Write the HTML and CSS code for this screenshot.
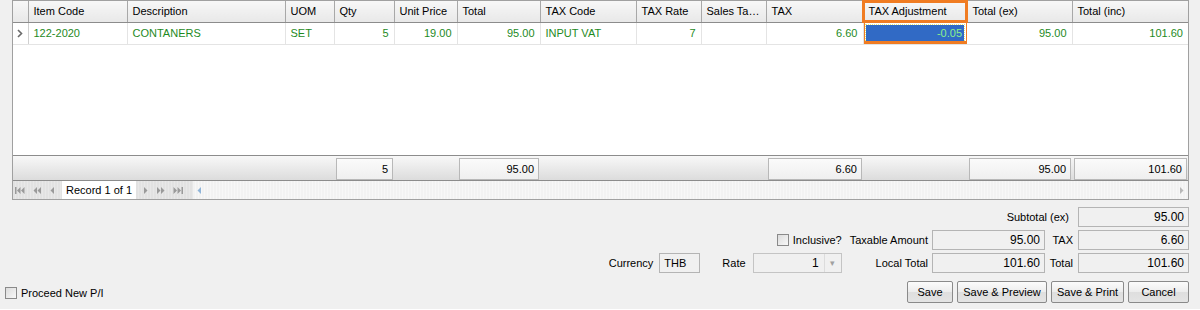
FILE: index.html
```html
<!DOCTYPE html>
<html lang="en">
<head>
  <meta charset="UTF-8">
  <title>Purchase Invoice Lines</title>
  <link rel="stylesheet" href="styles.css">
</head>
<body>
  <div class="grid">
    <table class="lines">
      <colgroup>
        <col style="width:15px"><col style="width:99px"><col style="width:158px"><col style="width:49px">
        <col style="width:60px"><col style="width:63px"><col style="width:83px"><col style="width:96px">
        <col style="width:65px"><col style="width:65px"><col style="width:97px"><col style="width:104px">
        <col style="width:105px"><col style="width:116px">
      </colgroup>
      <thead>
        <tr>
          <th class="ind"></th>
          <th>Item Code</th>
          <th>Description</th>
          <th>UOM</th>
          <th>Qty</th>
          <th>Unit Price</th>
          <th>Total</th>
          <th>TAX Code</th>
          <th>TAX Rate</th>
          <th>Sales Ta…</th>
          <th>TAX</th>
          <th class="hl-head">TAX Adjustment</th>
          <th>Total (ex)</th>
          <th>Total (inc)</th>
        </tr>
      </thead>
      <tbody>
        <tr class="line">
          <td class="ind"><svg width="6" height="9" viewBox="0 0 6 9"><path d="M1 1 L4.5 4.5 L1 8" fill="none" stroke="#6a6a6a" stroke-width="1.6"/></svg></td>
          <td>122-2020</td>
          <td>CONTANERS</td>
          <td>SET</td>
          <td class="num">5</td>
          <td class="num">19.00</td>
          <td class="num">95.00</td>
          <td>INPUT VAT</td>
          <td class="num">7</td>
          <td></td>
          <td class="num">6.60</td>
          <td class="num hl-cell"><span class="focus">-0.05</span></td>
          <td class="num">95.00</td>
          <td class="num">101.60</td>
        </tr>
        <tr class="empty">
          <td class="ind"></td>
          <td colspan="13"></td>
        </tr>
      </tbody>
    </table>

    <div class="sums">
      <div></div><div></div><div></div><div></div>
      <div class="sum">5</div>
      <div></div>
      <div class="sum">95.00</div>
      <div></div><div></div><div></div>
      <div class="sum">6.60</div>
      <div></div>
      <div class="sum">95.00</div>
      <div class="sum">101.60</div>
    </div>

    <div class="nav">
      <div class="nav-buttons">
        <svg width="10" height="7" viewBox="0 0 10 7"><rect x="0" y="0" width="1.5" height="7" fill="#9a9a9a"/><path d="M5.5 0 L2 3.5 L5.5 7Z M9.5 0 L6 3.5 L9.5 7Z" fill="#9a9a9a"/></svg>
        <svg width="9" height="7" viewBox="0 0 9 7"><path d="M4 0 L0.5 3.5 L4 7Z M8 0 L4.5 3.5 L8 7Z" fill="#9a9a9a"/></svg>
        <svg width="4" height="7" viewBox="0 0 4 7"><path d="M4 0 L0.5 3.5 L4 7Z" fill="#9a9a9a"/></svg>
        <span class="record">Record 1 of 1</span>
        <svg width="4" height="7" viewBox="0 0 4 7"><path d="M0 0 L3.5 3.5 L0 7Z" fill="#9a9a9a"/></svg>
        <svg width="9" height="7" viewBox="0 0 9 7"><path d="M1 0 L4.5 3.5 L1 7Z M5 0 L8.5 3.5 L5 7Z" fill="#9a9a9a"/></svg>
        <svg width="10" height="7" viewBox="0 0 10 7"><path d="M0.5 0 L4 3.5 L0.5 7Z M4.5 0 L8 3.5 L4.5 7Z" fill="#9a9a9a"/><rect x="8.5" y="0" width="1.5" height="7" fill="#9a9a9a"/></svg>
      </div>
      <div class="hscroll">
        <svg width="4" height="7" viewBox="0 0 4 7"><path d="M4 0 L0.5 3.5 L4 7Z" fill="#8fb4d8"/></svg>
        <svg width="4" height="7" viewBox="0 0 4 7"><path d="M0 0 L3.5 3.5 L0 7Z" fill="#b8b8b8"/></svg>
      </div>
    </div>
  </div>

  <div class="summary">
    <div class="label span3">Subtotal (ex)</div>
    <div class="box">95.00</div>

    <div class="label lead">
      <label class="check"><span class="tick"></span>Inclusive?</label>
      <span class="caption">Taxable Amount</span>
    </div>
    <div class="box">95.00</div>
    <div class="label small">TAX</div>
    <div class="box">6.60</div>

    <div class="label lead">
      <span>Currency</span>
      <span class="box code">THB</span>
      <span class="rate-label">Rate</span>
      <span class="combo"><span class="combo-val">1</span><span class="combo-btn">&#x25BE;</span></span>
      <span class="caption wide">Local Total</span>
    </div>
    <div class="box">101.60</div>
    <div class="label small">Total</div>
    <div class="box">101.60</div>
  </div>

  <div class="actions">
    <label class="check proceed"><span class="tick"></span>Proceed New P/I</label>
    <div class="buttons">
      <button class="btn save">Save</button>
      <button class="btn preview">Save &amp; Preview</button>
      <button class="btn print">Save &amp; Print</button>
      <button class="btn cancel">Cancel</button>
    </div>
  </div>
</body>
</html>
```

FILE: styles.css
```css
body {
  margin: 0;
  background: #f0f0f0;
  font-family: "Liberation Sans", Arial, sans-serif;
  font-size: 11px;
  color: #000;
  height: 310px;
  overflow: hidden;
  border-bottom: 1px solid #fff;
  box-sizing: border-box;
}

/* grid */
.grid {
  margin-left: 12px;
  width: 1177px;
  border: 1px solid #a0a0a0;
  box-sizing: border-box;
  background: #fff;
}

.lines {
  border-collapse: collapse;
  table-layout: fixed;
  width: 1175px;
}

.lines th {
  height: 21px;
  padding: 0 5px;
  text-align: left;
  font-weight: normal;
  white-space: nowrap;
  overflow: hidden;
  background: linear-gradient(#f7f7f7, #e8e8e8);
  border-right: 1px solid #a8a8a8;
  border-bottom: 1px solid #8c8c8c;
  box-sizing: border-box;
}

.lines th:last-child {
  border-right: none;
}

.lines td {
  height: 21px;
  padding: 0 5px;
  color: #1e8a1e;
  white-space: nowrap;
  overflow: hidden;
  border-right: 1px solid #e4e4e4;
  border-bottom: 1px solid #e4e4e4;
  box-sizing: border-box;
}

.lines td:last-child {
  border-right: none;
}

.lines .num {
  text-align: right;
}

.lines .ind {
  padding: 0;
  background: linear-gradient(#f7f7f7, #e8e8e8);
  border-right: 1px solid #a8a8a8;
  text-align: center;
}

.lines td.ind {
  background: #fff;
  border-right: 1px solid #d0d0d0;
}

.lines td.ind svg {
  display: block;
  margin: 0 auto;
}

.lines .empty td {
  height: 111px;
  border: none;
}

.hl-head {
  outline: 3px solid #f07c22;
  outline-offset: -2px;
  position: relative;
}

.lines .hl-cell {
  position: relative;
  padding: 2px 3px 2px 2px;
  border-right: none;
}

.hl-cell::after {
  content: "";
  position: absolute;
  left: -2px;
  right: -2px;
  top: -1px;
  bottom: 0;
  border: 3px solid #f07c22;
  border-top: none;
  pointer-events: none;
}

.focus {
  display: block;
  height: 17px;
  line-height: 17px;
  padding-right: 2px;
  background: #316ac5;
  color: #8cf08c;
  outline: 1px dotted #e8e87a;
}

/* footer sums */
.sums {
  display: grid;
  grid-template-columns: 15px 99px 158px 49px 60px 63px 83px 96px 65px 65px 97px 104px 105px 116px;
  height: 26px;
  padding: 2px 0;
  box-sizing: border-box;
  border-top: 1px solid #8c8c8c;
  border-bottom: 1px solid #8c8c8c;
  background: linear-gradient(#f8f8f8, #dcdcdc);
}

.sum {
  margin: 0 1px 0 2px;
  border: 1px solid #b8b8b8;
  background: linear-gradient(#fbfbfb, #efefef);
  text-align: right;
  padding-right: 4px;
  line-height: 20px;
}

/* navigator */
.nav {
  display: flex;
  height: 18px;
  align-items: stretch;
}

.nav-buttons {
  display: flex;
  align-items: center;
  gap: 8px;
  padding: 0 10px 0 2px;
  background: repeating-linear-gradient(90deg, #e2e2e2 0 2px, #e8e8e8 2px 3px);
  flex: none;
  white-space: nowrap;
}

.nav-buttons svg {
  flex: none;
}

.record {
  background: #fff;
  padding: 0 4px;
  height: 18px;
  line-height: 18px;
  font-size: 11px;
  white-space: nowrap;
  flex: none;
}

.hscroll {
  flex: 1;
  display: flex;
  align-items: center;
  justify-content: space-between;
  padding: 0 4px 0 4px;
  background: repeating-linear-gradient(90deg, #f2f2f2 0 2px, #f7f7f7 2px 3px);
}

/* summary block */
.summary {
  display: grid;
  grid-template-columns: auto 113px 33px 111px;
  grid-auto-rows: 20px;
  row-gap: 3px;
  justify-content: end;
  margin: 7px 11px 0 0;
}

.label {
  display: flex;
  align-items: center;
  justify-content: flex-end;
  padding-right: 4px;
  white-space: nowrap;
}

.span3 {
  grid-column: 1 / 4;
  padding-right: 9px;
}

.small {
  padding-right: 5px;
}

.box {
  border: 1px solid #b4b4b4;
  background: #f0f0f0;
  box-sizing: border-box;
  text-align: right;
  padding-right: 4px;
  line-height: 18px;
  font-size: 12px;
}

.lead .caption {
  margin-left: 8px;
}

.lead .caption.wide {
  margin-left: 34px;
}

.box.code {
  display: inline-block;
  width: 41px;
  height: 20px;
  text-align: left;
  padding-left: 4px;
  margin-left: 6px;
  font-size: 11px;
}

.rate-label {
  margin-left: 22px;
  margin-right: 7px;
}

.combo {
  display: inline-flex;
  width: 89px;
  height: 20px;
  border: 1px solid #c4c4c4;
  box-sizing: border-box;
  background: #f0f0f0;
}

.combo-val {
  flex: 1;
  text-align: right;
  padding-right: 5px;
  line-height: 18px;
  font-size: 12px;
  border-right: 1px solid #dcdcdc;
}

.combo-btn {
  width: 16px;
  text-align: center;
  color: #a0a0a0;
  font-size: 9px;
  line-height: 18px;
}

.check {
  display: inline-flex;
  align-items: center;
  gap: 4px;
}

.tick {
  width: 10px;
  height: 10px;
  border: 1px solid #8a8a8a;
  background: linear-gradient(135deg, #dcdcdc, #f8f8f8);
}

/* actions */
.actions {
  display: flex;
  justify-content: space-between;
  align-items: center;
  margin: 8px 11px 0 5px;
}

.proceed {
  font-size: 11px;
  margin-top: 2px;
}

.buttons {
  display: flex;
  gap: 4px;
}

.btn {
  height: 22px;
  padding: 0;
  border: 1px solid #8a8a8a;
  border-radius: 2px;
  background: linear-gradient(#fbfbfb 0%, #ececec 50%, #dedede 51%, #e4e4e4 100%);
  font-family: "Liberation Sans", Arial, sans-serif;
  font-size: 11px;
  color: #000;
}

.save { width: 46px; }
.preview { width: 90px; }
.print { width: 73px; }
.cancel { width: 61px; }
```
